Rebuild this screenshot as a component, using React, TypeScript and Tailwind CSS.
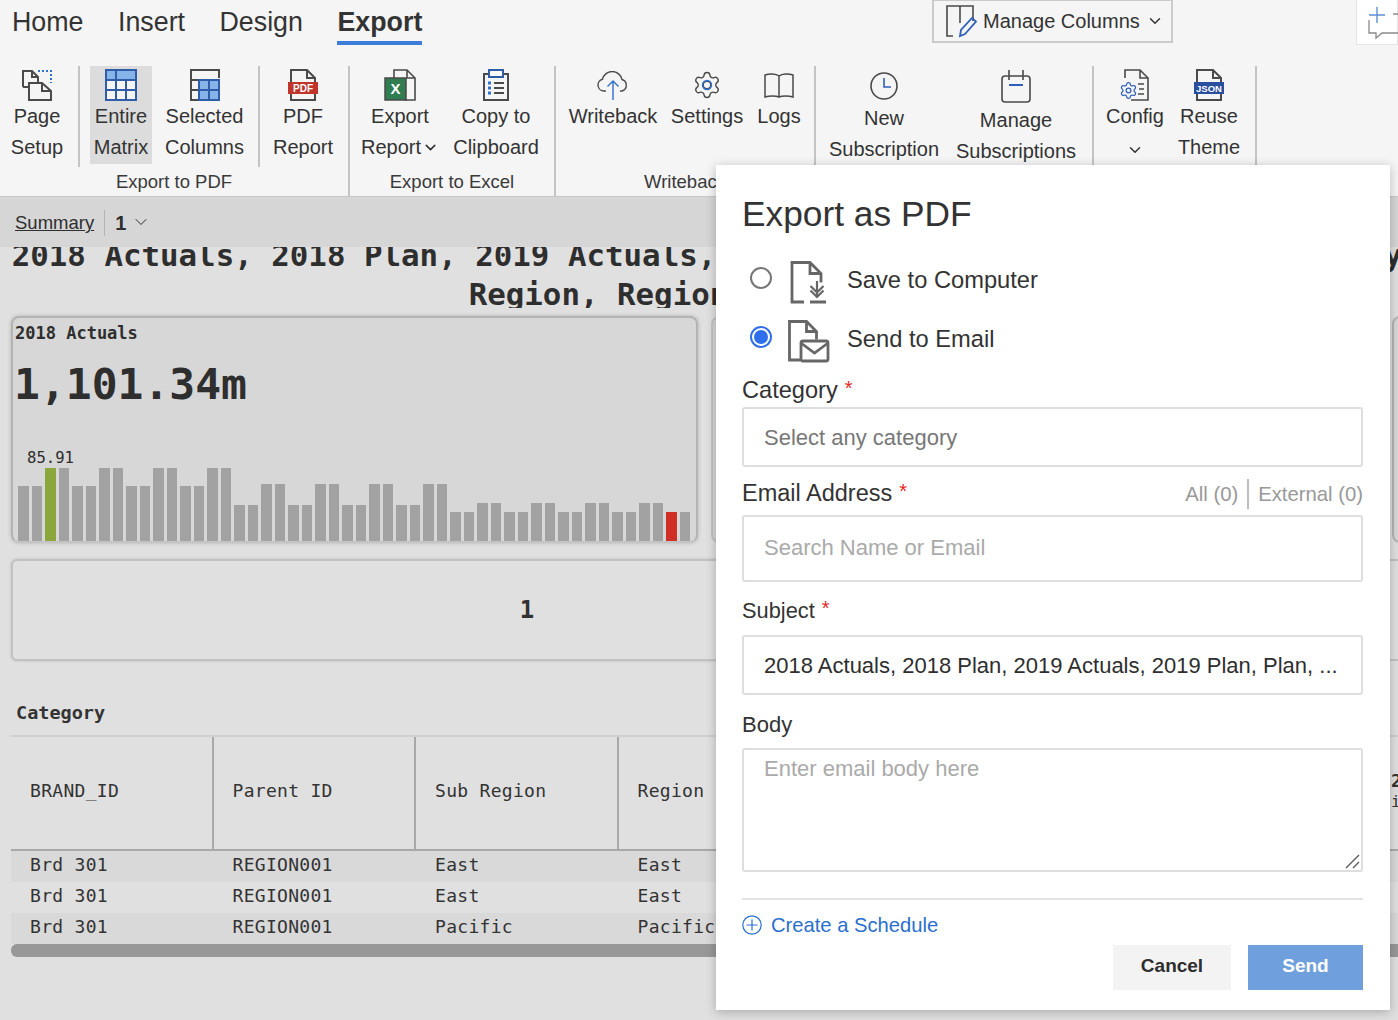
import type { ReactNode } from 'react'
import { ChevronDown, Settings } from 'lucide-react'

const GRAY = '#4a4a4a'
const BLUE = '#2f5da8'

function PageSetupIcon() {
  return (
    <svg width="32" height="34" viewBox="0 0 32 34" fill="none" stroke={GRAY} strokeWidth="2">
      <path d="M2 19V3h9l6 6v5M11 3v6h6M2 19h6" />
      <path d="M8 15h13l9 8v9H8zM21 15v8h9" />
      <path d="M17 3h13v12" stroke="#2f6fd0" strokeDasharray="2 2" />
    </svg>
  )
}

function EntireMatrixIcon() {
  return (
    <svg width="32" height="34" viewBox="0 0 32 34" fill="none">
      <rect x="1" y="2" width="30" height="30" fill="#f4f4f4" stroke={BLUE} strokeWidth="2" />
      <rect x="2" y="3" width="28" height="9" fill="#86b3e8" />
      <path d="M1 12h30M1 22h30M11 2v30M21 12v20" stroke={BLUE} strokeWidth="2" />
    </svg>
  )
}

function SelectedColumnsIcon() {
  return (
    <svg width="32" height="34" viewBox="0 0 32 34" fill="none">
      <path d="M9 2H2v30h7M2 12h7M2 22h7M9 2h21v8" stroke={GRAY} strokeWidth="2" />
      <rect x="10" y="12" width="20" height="20" fill="#86b3e8" stroke={BLUE} strokeWidth="2" />
      <path d="M20 12v20M10 22h20" stroke={BLUE} strokeWidth="2" />
    </svg>
  )
}

function BadgeDocIcon({ label, color, size }: { label: string; color: string; size: number }) {
  return (
    <svg width="32" height="34" viewBox="0 0 32 34" fill="none">
      <path d="M4 14V2h16l8 8v4M20 2v8h8M4 26v6h24v-6" stroke={GRAY} strokeWidth="2" />
      <rect x="1" y="14" width="30" height="12" fill={color} />
      <text x="16" y="24" textAnchor="middle" fontSize={size} fontWeight="700" fill="#fff" fontFamily="Liberation Sans, sans-serif">
        {label}
      </text>
    </svg>
  )
}

function ExcelIcon() {
  return (
    <svg width="32" height="34" viewBox="0 0 32 34" fill="none">
      <path d="M10 10V2h13l8 8v22H20M23 2v8h8" stroke={GRAY} strokeWidth="1.6" />
      <rect x="1" y="10" width="21" height="22" fill="#2f7d50" stroke="#4a4a4a" strokeWidth="1.5" />
      <text x="11.5" y="26" textAnchor="middle" fontSize="15" fontWeight="700" fill="#fff" fontFamily="Liberation Sans, sans-serif">
        X
      </text>
    </svg>
  )
}

function ClipboardIcon() {
  return (
    <svg width="30" height="34" viewBox="0 0 30 34" fill="none">
      <rect x="3" y="6" width="24" height="26" stroke={GRAY} strokeWidth="2" />
      <rect x="8" y="2" width="14" height="7" fill="#fff" stroke={BLUE} strokeWidth="2" />
      <path d="M7 15h3M7 20h3M7 25h3" stroke="#2f6fd0" strokeWidth="3" />
      <path d="M13 15h10M13 20h10M13 25h10" stroke={GRAY} strokeWidth="2" />
    </svg>
  )
}

function CloudIcon() {
  return (
    <svg width="34" height="30" viewBox="0 0 34 30" fill="none" className="mt-[3px]">
      <path d="M10 20H8A6 6 0 0 1 6.5 8.2 10 10 0 0 1 26 8.5 6 6 0 0 1 26 20h-2" stroke={GRAY} strokeWidth="1.4" />
      <path d="M17 29V10M11.5 15.5L17 10l5.5 5.5" stroke="#2f6fd0" strokeWidth="1.4" />
    </svg>
  )
}

function GearIcon() {
  return (
    <svg width="30" height="32" viewBox="0 0 30 32" fill="none" className="mt-[1px]">
      <Settings x={0} y={1} width={30} height={30} stroke={GRAY} strokeWidth={1.1} />
      <circle cx="15" cy="16" r="4.5" stroke="#2f6fd0" strokeWidth="1.4" />
    </svg>
  )
}

function BookIcon() {
  return (
    <svg width="32" height="30" viewBox="0 0 32 30" fill="none" className="mt-[3px]">
      <path d="M16 5C13 2.5 6 2.5 2 4v22c4-1.5 11-1.5 14 0 3-1.5 10-1.5 14 0V4c-4-1.5-11-1.5-14 1zM16 5v21" stroke={GRAY} strokeWidth="1.5" />
    </svg>
  )
}

function ClockIcon() {
  return (
    <svg width="30" height="32" viewBox="0 0 30 32" fill="none" className="mt-[2px]">
      <circle cx="15" cy="16" r="13" stroke={GRAY} strokeWidth="1.6" />
      <path d="M15 8v9h7" stroke="#2f5fb8" strokeWidth="1.6" />
    </svg>
  )
}

function CalendarIcon() {
  return (
    <svg width="32" height="34" viewBox="0 0 32 34" fill="none" className="mt-[1px]">
      <rect x="2" y="7" width="28" height="26" rx="3" stroke={GRAY} strokeWidth="1.6" />
      <path d="M9 1v10M23 1v10" stroke={GRAY} strokeWidth="1.6" />
      <path d="M9 16h14" stroke="#2f5fb8" strokeWidth="2" />
    </svg>
  )
}

function ConfigIcon() {
  return (
    <svg width="32" height="34" viewBox="0 0 32 34" fill="none">
      <path d="M6 10V2h15l8 8v22H12M21 2v8h8M19 16h6M20 21h5M19 26h6" stroke={GRAY} strokeWidth="1.6" />
      <Settings x={0} y={13} width={19} height={19} stroke="#2f5fb8" strokeWidth={1.6} />
    </svg>
  )
}

function ManageColumnsIcon() {
  return (
    <svg width="32" height="34" viewBox="0 0 32 34" fill="none">
      <path d="M8 32H2V2h26v15M15 2v17" stroke={GRAY} strokeWidth="1.6" />
      <path d="M15 32l1-6 11-12 4 3.5L20 30z" stroke="#2f5fb8" strokeWidth="1.8" />
    </svg>
  )
}

function SaveDocIcon() {
  return (
    <svg width="38" height="44" viewBox="0 0 38 44" fill="none" stroke="#666" strokeWidth="2.8" className="mt-[5px]">
      <path d="M14 41H2V1.5h18l11 11v9M20 1.5v11h11" />
      <path d="M27 20v16M20.5 29.5l6.5 6.5 6.5-6.5M20.5 25l6.5 6.5 6.5-6.5" strokeWidth="2.2" />
      <path d="M20 41h16" strokeWidth="3" />
    </svg>
  )
}

function MailDocIcon() {
  return (
    <svg width="42" height="44" viewBox="0 0 42 44" fill="none" stroke="#666" strokeWidth="2.8" className="mt-[5px]">
      <path d="M12 40H1.5V1.5h17l10 10v8M18.5 1.5v10h10" />
      <rect x="13" y="21" width="27" height="20" rx="2" />
      <path d="M13 23l13.500 10 13.500-10" />
    </svg>
  )
}

type RibbonItem = { icon: ReactNode; lines: ReactNode[]; width: string; top?: string; active?: boolean }

function Item({ icon, lines, width, top, active }: RibbonItem) {
  return (
    <div className={`flex flex-col items-center h-[98px] ${width} ${active ? 'bg-[#dcdcdc]' : ''}`}>
      <div className="h-[35px] flex items-start pt-[2px]">{icon}</div>
      <div className={`text-[20px] leading-[31px] text-center whitespace-nowrap ${top ?? ''}`}>
        {lines.map((l, i) => (
          <div key={i} className="flex justify-center items-center">{l}</div>
        ))}
      </div>
    </div>
  )
}

function Sep() {
  return <div className="w-[2px] h-[101px] bg-[#c4c4c4] shrink-0" />
}

function Group({ width, label, children }: { width: string; label?: string; children: ReactNode }) {
  return (
    <div className={`${width} h-[130px] shrink-0 border-r-2 border-[#c4c4c4] flex flex-col`}>
      <div className="flex h-[101px]">{children}</div>
      {label && <div className="text-[18.500px] leading-[29px] text-center text-[#3a3a3a]">{label}</div>}
    </div>
  )
}

function Ribbon() {
  return (
    <div className="bg-[#f5f5f5] h-[197px] border-b border-[#c8c8c8] text-[#333]">
      <div className="flex h-[66px] items-start">
        <div className="w-[932px] shrink-0 flex gap-[34.500px] pl-[12px] text-[26.800px] leading-[41px] pt-[2px]">
          <span>Home</span>
          <span>Insert</span>
          <span>Design</span>
          <span className="font-bold h-[43px] border-b-4 border-[#3b7dd8]">Export</span>
        </div>
        <div className="w-[241px] h-[44px] -mt-[1px] shrink-0 border-2 border-[#cbcbcb] flex items-center pl-[11px] gap-[6px] text-[20px]">
          <ManageColumnsIcon />
          <span>Manage Columns</span>
          <ChevronDown size={18} strokeWidth={2} />
        </div>
        <div className="ml-[183px] w-[42px] h-[46px] -mt-[1px] bg-white border border-[#e4e4e4] shrink-0">
          <svg width="42" height="40" viewBox="0 0 42 40" fill="none">
            <path d="M20 7v16M12 15h16" stroke="#5f8fd0" strokeWidth="1.4" />
            <path d="M12 20v13h7v5l6-5h17M36 14h6" stroke="#8a8a8a" strokeWidth="1.3" />
          </svg>
        </div>
      </div>
      <div className="flex">
        <Group width="w-[350px]" label="Export to PDF">
          <Item icon={<PageSetupIcon />} lines={['Page', 'Setup']} width="w-[74px]" />
          <div className="w-[4px]" />
          <Sep />
          <div className="w-[10px]" />
          <Item icon={<EntireMatrixIcon />} lines={['Entire', 'Matrix']} width="w-[62px]" active />
          <Item icon={<SelectedColumnsIcon />} lines={['Selected', 'Columns']} width="w-[105px]" />
          <div className="w-[1px]" />
          <Sep />
          <Item icon={<BadgeDocIcon label="PDF" color="#c0342a" size={10} />} lines={['PDF', 'Report']} width="w-[86px]" />
        </Group>
        <Group width="w-[206px]" label="Export to Excel">
          <Item
            icon={<ExcelIcon />}
            lines={['Export', <>Report<ChevronDown size={17} strokeWidth={2.2} className="ml-[1px]" /></>]}
            width="w-[100px]"
          />
          <Item icon={<ClipboardIcon />} lines={['Copy to', 'Clipboard']} width="w-[92px]" />
        </Group>
        <Group width="w-[260px]" label="Writeback">
          <Item icon={<CloudIcon />} lines={['Writeback']} width="w-[114px]" />
          <Item icon={<GearIcon />} lines={['Settings']} width="w-[74px]" />
          <Item icon={<BookIcon />} lines={['Logs']} width="w-[70px]" />
        </Group>
        <Group width="w-[278px]">
          <Item icon={<ClockIcon />} lines={['New', 'Subscription']} width="w-[136px]" top="mt-[2px]" />
          <Item icon={<CalendarIcon />} lines={['Manage', 'Subscriptions']} width="w-[128px]" top="mt-[4px]" />
        </Group>
        <Group width="w-[163px]">
          <Item icon={<ConfigIcon />} lines={['Config', <ChevronDown size={18} strokeWidth={2} className="mt-[9px]" />]} width="w-[82px]" />
          <Item icon={<BadgeDocIcon label="JSON" color="#2a4f9e" size={9.5} />} lines={['Reuse', 'Theme']} width="w-[66px]" />
        </Group>
      </div>
    </div>
  )
}

const BAR_HEIGHTS = [55, 73, 55, 73, 55, 73, 55, 73, 36, 57, 36, 57, 36, 57, 36, 57, 29, 38, 29, 38, 29, 38, 29, 38, 29]
const BARS = BAR_HEIGHTS.flatMap((h) => [h, h])

function KpiCard() {
  return (
    <div className="w-[687px] h-[227px] shrink-0 flex flex-col bg-[#d7d7d7] rounded-lg border-2 border-[#b4b4b4] border-b-[#c4c4c4] shadow-[0_0_4px_rgba(0,0,0,0.2)] text-[#2e2e2e]">
      <div className="pl-[2px] pt-[3px] text-[17px] leading-[24px] font-bold">2018 Actuals</div>
      <div className="pl-[1px] mt-[14px] text-[43px] leading-[50px] font-bold">1,101.34m</div>
      <div className="mt-auto pl-[14px] text-[15.600px] leading-[20px]">85.91</div>
      <div className="flex items-end gap-[3px] pl-[5px]">
        {BARS.map((h, i) => (
          <div
            key={i}
            className={`w-[10.500px] shrink-0 ${i === 2 ? 'bg-[#8ba63a]' : i === 48 ? 'bg-[#cf2f25]' : 'bg-[#a2a2a2]'}`}
            style={{ height: h }}
          />
        ))}
      </div>
    </div>
  )
}

const COLS = ['BRAND_ID', 'Parent ID', 'Sub Region', 'Region', '', '']
const ROWS = [
  ['Brd 301', 'REGION001', 'East', 'East'],
  ['Brd 301', 'REGION001', 'East', 'East'],
  ['Brd 301', 'REGION001', 'Pacific', 'Pacific'],
]
const TABLE_GRID = 'grid grid-cols-[202.5px_202.5px_202.5px_202.5px_277px_277px_200px]'

function DataTable() {
  return (
    <div className="ml-[11px] w-[1600px] text-[18px] tracking-[0.3px] text-[#333]">
      <div className={`${TABLE_GRID} h-[116px] border-t-2 border-[#cfcfcf] border-b-2 border-b-[#a9a9a9]`}>
        {COLS.map((c, i) => (
          <div key={i} className="border-r-2 border-[#a9a9a9] flex items-center pl-[19px] pb-[6px]">{c}</div>
        ))}
        <div className="flex flex-col justify-center pl-[16px] pb-[4px] leading-[21px] whitespace-nowrap">
          <span className="font-bold">2018 Actuals</span>
          <span className="text-[16px]">in m</span>
        </div>
      </div>
      {ROWS.map((r, i) => (
        <div key={i} className={`${TABLE_GRID} h-[31px] items-center pb-[5px] ${i === 1 ? 'bg-[#e0e0e0]' : 'bg-[#d9d9d9]'}`}>
          {r.map((c, j) => (
            <div key={j} className="pl-[19px] whitespace-nowrap">{c}</div>
          ))}
        </div>
      ))}
      <div className="h-[13px] rounded-md bg-[#989898]" />
    </div>
  )
}

function Report() {
  return (
    <div className="h-[773px] overflow-hidden bg-[#e0e0e0] font-['DejaVu_Sans_Mono',monospace]">
      <div className="-mt-[11px] h-[72px] overflow-hidden w-[1414px] text-center text-[30.800px] leading-[39px] font-bold text-[#2e2e2e] whitespace-nowrap">
        <div>2018 Actuals, 2018 Plan, 2019 Actuals, 2019 Plan, Plan, Variance, Budget by</div>
        <div className="pl-[24px]">Region, Region, Region, Reg</div>
      </div>
      <div className="flex gap-[13px] ml-[11px] mt-[8px]">
        <KpiCard />
        <div className="w-[668px] h-[227px] shrink-0 bg-[#d7d7d7] rounded-lg border-2 border-[#c4c4c4]" />
        <div className="w-[400px] h-[227px] shrink-0 bg-[#d7d7d7] rounded-lg border-2 border-[#b4b4b4]" />
      </div>
      <div className="flex gap-[13px] ml-[11px] mt-[16px]">
        <div className="w-[1032px] h-[102px] shrink-0 flex items-center justify-center bg-[#e0e0e0] rounded-md border-2 border-[#c2c2c2] shadow-[0_0_3px_rgba(0,0,0,0.15)] text-[24px] font-bold text-[#333]">
          1
        </div>
        <div className="w-[600px] h-[102px] shrink-0 bg-[#e0e0e0] rounded-md border-2 border-[#c2c2c2]" />
      </div>
      <div className="ml-[16px] mt-[38px] h-[28px] text-[18.500px] leading-[28px] font-bold text-[#333]">Category</div>
      <div className="mt-[8px]">
        <DataTable />
      </div>
    </div>
  )
}

function Star() {
  return <span className="text-[#e5281f] text-[20px] leading-none ml-[7px] -mt-[6px]">*</span>
}

function Field({ className, children }: { className: string; children?: ReactNode }) {
  return (
    <div className={`relative border-2 border-[#dedede] rounded-[3px] pl-[20px] pr-[20px] text-[22px] ${className}`}>
      {children}
    </div>
  )
}

function ExportModal() {
  return (
    <div className="absolute left-[716px] top-[165px] w-[674px] h-[845px] bg-white shadow-[0_2px_10px_rgba(0,0,0,0.25)] pl-[26px] pr-[27px] pt-[28px] text-[#333] flex flex-col">
      <div className="text-[35.300px] leading-[42px]">Export as PDF</div>

      <div className="mt-[23px] h-[44px] flex items-center text-[23.700px]">
        <div className="ml-[8px] -mt-[5px] w-[22px] h-[22px] rounded-full border-2 border-[#767676] bg-white" />
        <div className="ml-[18px] w-[38px]"><SaveDocIcon /></div>
        <span className="ml-[19px] pt-[2px]">Save to Computer</span>
      </div>
      <div className="mt-[15px] h-[44px] flex items-center text-[23.700px]">
        <div className="ml-[8px] -mt-[5px] w-[22px] h-[22px] rounded-full border-2 border-[#2f6fed] bg-white flex items-center justify-center">
          <div className="w-[14px] h-[14px] rounded-full bg-[#2f6fed]" />
        </div>
        <div className="ml-[16px] w-[42px]"><MailDocIcon /></div>
        <span className="ml-[17px] pt-[2px]">Send to Email</span>
      </div>

      <div className="mt-[15px] h-[28px] flex items-center pt-[1px] text-[23.600px]">Category<Star /></div>
      <Field className="mt-[3px] h-[60px] flex items-center pt-[1px] text-[#777] text-[22.400px]">Select any category</Field>

      <div className="mt-[13px] h-[28px] flex items-center text-[23.500px]">
        Email Address<Star />
        <div className="ml-auto flex items-center text-[20.300px] text-[#999]">
          <span>All (0)</span>
          <div className="w-[2px] h-[30px] bg-[#bdbdbd] mx-[9px]" />
          <span>External (0)</span>
        </div>
      </div>
      <Field className="mt-[7px] h-[67px] flex items-center pb-[3px] text-[#aaa]">Search Name or Email</Field>

      <div className="mt-[15px] h-[28px] flex items-center text-[21.800px]">Subject<Star /></div>
      <Field className="mt-[10px] h-[60px] flex items-center pt-[1px] text-[#2e2e2e]">
        <span className="whitespace-nowrap text-[22px]">2018 Actuals, 2018 Plan, 2019 Actuals, 2019 Plan, Plan, ...</span>
      </Field>

      <div className="mt-[15px] h-[28px] flex items-center text-[22px]">Body</div>
      <Field className="mt-[10px] h-[124px] pt-[3px] leading-[32px] text-[#aaa]">
        Enter email body here
        <svg width="15" height="15" viewBox="0 0 15 15" className="absolute right-[1px] bottom-[1px]" stroke="#555" strokeWidth="1.3">
          <path d="M1 14L14 1M8 14l6-6" />
        </svg>
      </Field>

      <div className="mt-[26px] h-[2px] bg-[#e2e2e2]" />
      <div className="mt-[11px] h-[28px] flex items-center gap-[9px] text-[20.200px] text-[#2a6fd0]">
        <svg width="20" height="20" viewBox="0 0 20 20" fill="none" stroke="#2a6fd0" strokeWidth="1.2">
          <circle cx="10" cy="10" r="9.2" />
          <path d="M10 4.5v11M4.5 10h11" />
        </svg>
        Create a Schedule
      </div>
      <div className="mt-[6px] flex justify-end gap-[17px] text-[19px] font-bold">
        <div className="w-[118px] h-[45px] pb-[2px] bg-[#f3f3f3] text-[#2e2e2e] flex items-center justify-center">Cancel</div>
        <div className="w-[115px] h-[45px] pb-[2px] bg-[#6f9fdc] text-white flex items-center justify-center">Send</div>
      </div>
    </div>
  )
}

export default function App() {
  return (
    <div className="relative w-[1398px] h-[1020px] overflow-hidden bg-[#e0e0e0] font-['Liberation_Sans',Arial,sans-serif]">
      <Ribbon />
      <div className="h-[50px] bg-[#d6d6d6] flex items-center pl-[15px] pt-[2px] text-[#2e2e2e]">
        <span className="text-[18.500px] underline">Summary</span>
        <div className="w-[1px] h-[26px] bg-[#b4b4b4] ml-[10px]" />
        <span className="text-[20px] font-bold ml-[10px]">1</span>
        <ChevronDown size={20} strokeWidth={1.2} className="ml-[5px] -mt-[2px]" />
      </div>
      <Report />
      <ExportModal />
    </div>
  )
}
